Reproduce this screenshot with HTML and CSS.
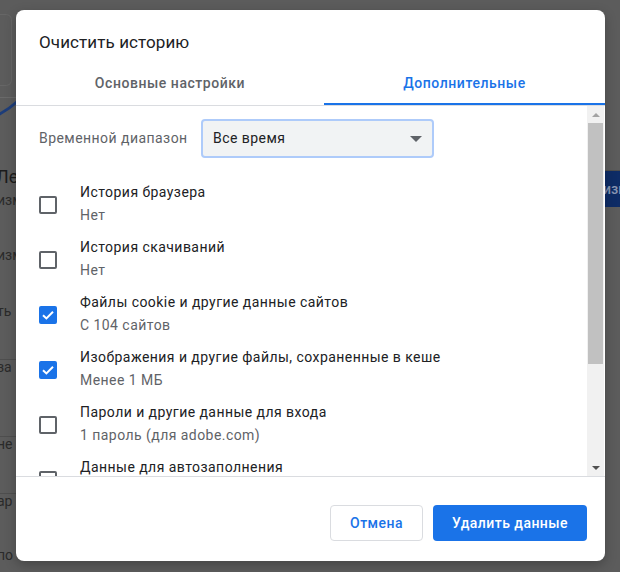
FILE: index.html
```html
<!DOCTYPE html>
<html lang="ru">
<head>
<meta charset="utf-8">
<title>Очистить историю</title>
<link rel="stylesheet" href="styles.css">
</head>
<body>
<div class="page">
  <div class="page-left">
    <div class="bg-top">
      <div class="bg-search"></div>
    </div>
    <div class="bg-logo">
      <svg width="20" height="30" viewBox="0 0 20 30"><path d="M-4 18 Q8 12 18 3" stroke="#1d3d7a" stroke-width="3" fill="none"/></svg>
    </div>
    <div class="bg-head">Лента</div>
    <div class="bg-row r1">изм</div>
    <div class="bg-row r2">изм</div>
    <div class="bg-row r3">ть</div>
    <div class="bg-row r4 line">за</div>
    <div class="bg-row r5 line">не</div>
    <div class="bg-row r6 line">ар</div>
    <div class="bg-row r7">по</div>
  </div>
  <div class="page-right">
    <div class="bg-btn">изм</div>
  </div>
</div>

<div class="dialog">
  <div class="dialog-title">Очистить историю</div>
  <div class="tabs">
    <div class="tab tab-basic">Основные настройки</div>
    <div class="tab tab-advanced active">Дополнительные</div>
  </div>
  <div class="body">
    <div class="list">
      <div class="range">
        <span class="range-label">Временной диапазон</span>
        <div class="select">
          <span>Все время</span>
          <span class="select-arrow"></span>
        </div>
      </div>
      <div class="item">
        <span class="checkbox"></span>
        <div class="item-text"><div class="item-title">История браузера</div><div class="item-sub">Нет</div></div>
      </div>
      <div class="item">
        <span class="checkbox"></span>
        <div class="item-text"><div class="item-title">История скачиваний</div><div class="item-sub">Нет</div></div>
      </div>
      <div class="item">
        <span class="checkbox checked"><svg viewBox="0 0 18 18" width="18" height="18"><path d="M4 9.2 L7.4 12.4 L14 5.8" stroke="#fff" stroke-width="2" fill="none"/></svg></span>
        <div class="item-text"><div class="item-title">Файлы cookie и другие данные сайтов</div><div class="item-sub">С 104 сайтов</div></div>
      </div>
      <div class="item">
        <span class="checkbox checked"><svg viewBox="0 0 18 18" width="18" height="18"><path d="M4 9.2 L7.4 12.4 L14 5.8" stroke="#fff" stroke-width="2" fill="none"/></svg></span>
        <div class="item-text"><div class="item-title">Изображения и другие файлы, сохраненные в кеше</div><div class="item-sub">Менее 1 МБ</div></div>
      </div>
      <div class="item">
        <span class="checkbox"></span>
        <div class="item-text"><div class="item-title">Пароли и другие данные для входа</div><div class="item-sub">1 пароль (для adobe.com)</div></div>
      </div>
      <div class="item">
        <span class="checkbox"></span>
        <div class="item-text"><div class="item-title">Данные для автозаполнения</div><div class="item-sub">Нет</div></div>
      </div>
    </div>
    <div class="scrollbar">
      <div class="sb-btn"><span class="sb-up"></span></div>
      <div class="sb-track"><div class="sb-thumb"></div></div>
      <div class="sb-btn"><span class="sb-down"></span></div>
    </div>
  </div>
  <div class="footer">
    <button class="btn btn-cancel">Отмена</button>
    <button class="btn btn-primary">Удалить данные</button>
  </div>
</div>
</body>
</html>
```
FILE: styles.css
```css
* { box-sizing: border-box; }
html, body { margin: 0; padding: 0; }
body {
  width: 620px;
  height: 572px;
  overflow: hidden;
  background: #5c5c5c;
  font-family: Roboto, "Liberation Sans", sans-serif;
  position: relative;
}
.page {
  display: flex;
  justify-content: space-between;
  height: 572px;
  overflow: hidden;
}
.page-left {
  width: 60px;
  display: flex;
  flex-direction: column;
  overflow: hidden;
}
.page-left > div { flex: none; }
.bg-top {
  height: 98px;
  border-bottom: 1px solid #6a6a6a;
  padding-top: 14px;
}
.bg-search {
  width: 12px;
  height: 72px;
  border: 1px solid #666;
  border-left: none;
  border-radius: 0 6px 6px 0;
}
.bg-logo { height: 30px; }
.bg-logo svg { display: block; }
.bg-head {
  height: 65px;
  font-size: 18px;
  color: #1c1c1c;
  padding-top: 39px;
  line-height: 20px;
  margin-left: -4px;
}
.bg-row {
  height: 55px;
  font-size: 14px;
  line-height: 14px;
  color: #2a2a2a;
  margin-left: -3px;
}
.bg-row.r2 { height: 56px; }
.bg-row.r4 { height: 77px; }
.bg-row.r5 { height: 57px; }
.bg-row.r7 { height: 27px; }
.bg-row.line { border-top: 1px solid #4e4e4e; }
.page-right {
  width: 15px;
  display: flex;
  flex-direction: column;
  overflow: hidden;
}
.bg-btn {
  margin-top: 170px;
  height: 37px;
  width: 40px;
  flex: none;
  background: #0e2c66;
  color: #8a97b3;
  font-size: 14px;
  font-weight: 500;
  line-height: 37px;
  margin-left: -2px;
  border-top: 1px solid #4e4e4e;
}

.dialog {
  position: absolute;
  left: 16px;
  top: 10px;
  width: 589px;
  height: 551px;
  background: #fff;
  border-radius: 8px;
  display: flex;
  flex-direction: column;
  overflow: hidden;
  box-shadow: 0 4px 12px rgba(0,0,0,0.25);
}
.dialog-title {
  padding: 21px 23px 0;
  height: 55px;
  font-size: 17px;
  color: #202124;
  line-height: 22px;
  letter-spacing: 0.1px;
}
.tabs {
  display: flex;
  height: 41px;
  border-bottom: 1px solid #dadce0;
}
.tab {
  font-size: 14px;
  font-weight: 500;
  letter-spacing: 0.55px;
  color: #5f6368;
  display: flex;
  align-items: center;
  justify-content: center;
  padding-bottom: 4px;
}
.tab-basic { width: 308px; }
.tab-advanced { flex: 1; }
.tab.active {
  color: #1a73e8;
  border-bottom: 2px solid #1a73e8;
  padding-bottom: 2px;
}
.body {
  flex: 1;
  display: flex;
  border-bottom: 1px solid #dadce0;
  min-height: 0;
}
.list {
  flex: 1;
  overflow: hidden;
  padding: 12px 0 0 23px;
}
.range {
  display: flex;
  align-items: center;
  height: 40px;
  margin-bottom: 18px;
}
.range-label {
  font-size: 14px;
  letter-spacing: 0.45px;
  color: #5f6368;
  width: 162px;
}
.select {
  width: 233px;
  height: 39px;
  border: 2px solid #aecbfa;
  border-radius: 4px;
  background: #f1f3f4;
  display: flex;
  align-items: center;
  justify-content: space-between;
  padding: 0 10px 0 10px;
  font-size: 14px;
  letter-spacing: 0.45px;
  color: #202124;
}
.select-arrow {
  width: 0;
  height: 0;
  border-left: 6px solid transparent;
  border-right: 6px solid transparent;
  border-top: 6px solid #5f6368;
  margin-top: 1px;
}
.item {
  display: flex;
  align-items: center;
  height: 55px;
}
.checkbox {
  width: 18px;
  height: 18px;
  border: 2px solid #5f6368;
  border-radius: 2px;
  margin-right: 23px;
  flex: none;
  position: relative;
  margin-top: 2px;
}
.checkbox.checked {
  background: #1a73e8;
  border-color: #1a73e8;
}
.checkbox svg { position: absolute; left: -2px; top: -2px; }
.item-title {
  font-size: 14px;
  letter-spacing: 0.45px;
  color: #202124;
  line-height: 20px;
}
.item-sub {
  font-size: 14px;
  letter-spacing: 0.45px;
  color: #5f6368;
  line-height: 20px;
  margin-top: 3px;
}
.scrollbar {
  width: 17px;
  background: #f1f1f1;
  display: flex;
  flex-direction: column;
  margin-right: 1px;
}
.sb-btn {
  height: 17px;
  display: flex;
  align-items: center;
  justify-content: center;
}
.sb-up, .sb-down {
  width: 0; height: 0;
  border-left: 4px solid transparent;
  border-right: 4px solid transparent;
}
.sb-up { border-bottom: 4px solid #a3a3a3; }
.sb-down { border-top: 4px solid #505050; }
.sb-track { flex: 1; }
.sb-thumb {
  height: 241px;
  background: #c1c1c1;
  margin: 0 1px;
}
.footer {
  height: 84px;
  display: flex;
  justify-content: flex-end;
  align-items: flex-start;
  gap: 10px;
  padding: 28px 18px 0 0;
}
.btn {
  height: 36px;
  border-radius: 4px;
  font-family: Roboto, "Liberation Sans", sans-serif;
  font-size: 14px;
  font-weight: 500;
  letter-spacing: 0.45px;
  padding: 0;
  cursor: pointer;
}
.btn-cancel {
  width: 93px;
  background: #fff;
  color: #1a73e8;
  border: 1px solid #dadce0;
}
.btn-primary {
  width: 154px;
  background: #1a73e8;
  color: #fff;
  border: none;
}
```
